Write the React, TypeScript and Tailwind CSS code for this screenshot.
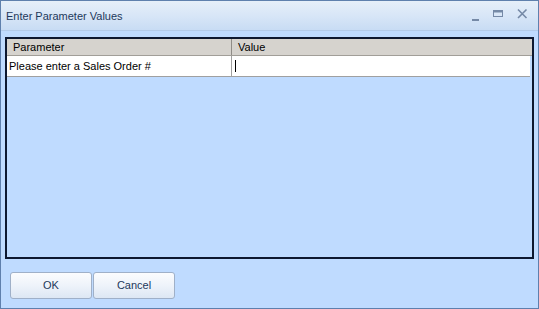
import React from "react";

export default function App() {
  return (
    <div
      className="w-[539px] h-[309px] overflow-hidden flex flex-col border border-[#5f80ad] bg-[#bfdbff]"
      style={{ fontFamily: '"Liberation Sans", Arial, sans-serif' }}
    >
      {/* Title bar */}
      <div className="h-[30px] shrink-0 flex items-center justify-between pl-[5px] pr-[10px] bg-gradient-to-b from-[#e6eff9] via-[#d8e6f7] to-[#c8dcf4] border-b border-[#b3cbea]">
        <span className="text-[11px] text-[#1e395b] pt-[2px]">Enter Parameter Values</span>
        <div className="flex items-start text-[#5c7394]">
          <svg width="8" height="12" viewBox="0 0 8 12" className="mt-[2px]">
            <rect x="0" y="8" width="7" height="2" fill="#7589a6" />
          </svg>
          <svg width="11" height="12" viewBox="0 0 11 12" className="ml-[13px]">
            <rect x="0.5" y="1.5" width="9" height="6" fill="none" stroke="#7589a6" />
            <rect x="0.5" y="1.5" width="9" height="2" fill="#7589a6" />
          </svg>
          <svg width="11" height="12" viewBox="0 0 11 12" className="ml-[13px] -mt-[1px]">
            <path d="M1 1.5 L9.5 10 M9.5 1.5 L1 10" stroke="#7589a6" strokeWidth="1.6" />
          </svg>
        </div>
      </div>

      {/* Body */}
      <div className="flex-1 flex flex-col px-[4px] pt-[6px] pb-[9px]">
        <div className="h-[222px] border-2 border-[#0d1830] bg-[#bfdbff] flex flex-col">
          <div className="h-[17px] flex bg-[#d6d3ce] border-b border-[#a19e98] text-[11px] text-[#000]">
            <div className="w-[225px] pl-[6px] flex items-center border-r border-[#8f8c87]">Parameter</div>
            <div className="flex-1 pl-[6px] flex items-center">Value</div>
          </div>
          <div className="h-[21px] flex bg-white border-b border-[#a0a0a0] mr-[2px] text-[11px] text-black">
            <div className="w-[225px] pl-[2px] flex items-center border-r border-[#a0a0a0]">Please enter a Sales Order #</div>
            <div className="flex-1 pl-[3px] flex items-center">
              <span className="w-[1px] h-[12px] bg-black" />
            </div>
          </div>
        </div>

        <div className="mt-[13px] flex gap-[1px] pl-[5px]">
          <button className="w-[82px] h-[27px] rounded-[3px] border border-[#9fb0c8] bg-gradient-to-b from-[#fbfcfe] via-[#eef3fa] to-[#dde7f4] text-[11px] text-[#1e395b]">
            OK
          </button>
          <button className="w-[82px] h-[27px] rounded-[3px] border border-[#9fb0c8] bg-gradient-to-b from-[#fbfcfe] via-[#eef3fa] to-[#dde7f4] text-[11px] text-[#1e395b]">
            Cancel
          </button>
        </div>
      </div>
    </div>
  );
}
